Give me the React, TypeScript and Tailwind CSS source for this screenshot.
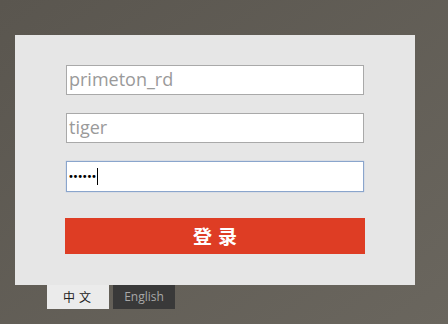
import React from "react";

export default function App() {
  const font = { fontFamily: '"Open Sans", "Noto Sans CJK SC", sans-serif' };
  return (
    <div
      className="w-[448px] h-[324px] overflow-hidden bg-gradient-to-br from-[#5a564f] to-[#6a665e] pt-[35px] pl-[15px]"
      style={font}
    >
      <div className="w-[400px] h-[250px] bg-[#e6e6e6] pt-[30px] pl-[51px] flex flex-col">
        <div className="w-[298px] h-[30px] bg-white border border-[#a9a9a9] flex items-center pl-[2px] text-[18px] text-[#9a9a9a] leading-none pb-[2px]">
          primeton_rd
        </div>
        <div className="w-[298px] h-[30px] bg-white border border-[#a9a9a9] flex items-center pl-[2px] text-[18px] text-[#9a9a9a] leading-none mt-[18px] pb-[2px]">
          tiger
        </div>
        <div className="w-[298px] h-[31px] bg-white border border-[#8aa5cc] shadow-[0_0_1px_#9bb3d8] flex items-center pl-[1px] mt-[18px]">
          <span className="text-[10px] text-black tracking-[-1.3px] leading-none" style={{ fontFamily: '"DejaVu Sans", sans-serif' }}>
            ••••••
          </span>
          <span className="w-px h-[17px] bg-black ml-[1px]"></span>
        </div>
        <div
          className="w-[300px] h-[36px] bg-[#de3d24] -ml-px mt-[26px] flex items-center justify-center text-white text-[19px] font-bold tracking-[6px] pl-[6px]"
          style={{ fontFamily: '"Noto Sans CJK SC", sans-serif' }}
        >
          登录
        </div>
      </div>
      <div className="flex pl-[32px] gap-[4px]">
        <div
          className="w-[62px] h-[24px] bg-[#ebebeb] flex items-center justify-center text-[12px] text-[#222] tracking-[4px] pl-[2px]"
          style={{ fontFamily: '"Noto Sans CJK SC", sans-serif' }}
        >
          中文
        </div>
        <div className="w-[62px] h-[24px] bg-[#393939] flex items-center justify-center text-[12px] text-[#a8a8a8]">
          English
        </div>
      </div>
    </div>
  );
}
